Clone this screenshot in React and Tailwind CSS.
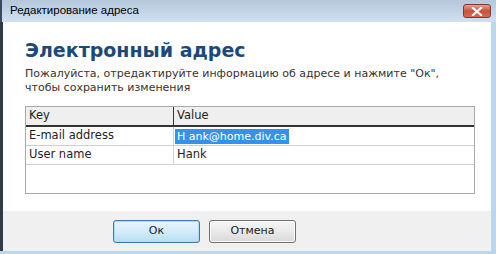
import React from "react";

export default function App() {
  const f = { fontFamily: '"DejaVu Sans", Verdana, sans-serif' };
  return (
    <div className="w-[496px] h-[254px] flex flex-col bg-[#bcd6ee] overflow-hidden" style={f}>
      {/* Title bar */}
      <div className="h-[22px] flex items-center justify-between pl-[8px] pr-[5px] bg-gradient-to-b from-[#b4c8dc] to-[#cfe0f1] border-l-[2px] border-[#3b4a5a]">
        <span className="text-[11.5px] text-black" style={{ fontFamily: '"Liberation Sans", Tahoma, sans-serif' }}>Редактирование адреса</span>
        <div className="w-[28px] h-[14px] rounded-[3px] border border-[#7a3a3a] bg-gradient-to-b from-[#e8a08c] via-[#c9503c] to-[#d86a52] flex items-center justify-center">
          <svg width="12" height="9" viewBox="0 0 12 9">
            <path d="M2 1 L10 8 M10 1 L2 8" stroke="#ffffff" strokeWidth="2.2" strokeLinecap="square" />
          </svg>
        </div>
      </div>
      {/* Body */}
      <div className="flex-1 flex flex-col mr-[5px] mb-[3px] bg-white border-l-[3px] border-[#2f3b48]">
        <div className="flex-1 flex flex-col pl-[22px] pr-[16px]">
          <h1 className="mt-[16px] text-[19px] leading-[24px] font-bold text-[#1c4a78]">Электронный адрес</h1>
          <p className="mt-[5px] text-[11px] leading-[14px] text-[#333333]">
            Пожалуйста, отредактируйте информацию об адресе и нажмите "Ок",
            <br />
            чтобы сохранить изменения
          </p>
          <div className="mt-[11px] w-[450px] h-[88px] border border-[#a9a9a9] text-[11.5px] text-[#222222]">
            <div className="flex h-[20px] bg-[#efefef] border-b-[2px] border-[#333333]">
              <div className="w-[148px] pl-[3px] flex items-center border-r-[1px] border-[#333333]">Key</div>
              <div className="flex-1 pl-[3px] flex items-center">Value</div>
            </div>
            <div className="flex h-[19px] border-b border-[#cfcfcf]">
              <div className="w-[148px] pl-[3px] flex items-center border-r border-[#cfcfcf]">E-mail address</div>
              <div className="flex-1 pl-[1px] flex items-center">
                <span className="bg-[#3592ec] text-white px-[2px] leading-[15px] text-[11px]">H ank@home.div.ca</span>
              </div>
            </div>
            <div className="flex h-[19px] border-b border-[#cfcfcf]">
              <div className="w-[148px] pl-[3px] flex items-center border-r border-[#cfcfcf]">User name</div>
              <div className="flex-1 pl-[3px] flex items-center">Hank</div>
            </div>
          </div>
        </div>
        <div className="h-[40px] bg-[#f0f0f0] flex items-start pt-[9px] pl-[110px] gap-[9px]">
          <button className="w-[87px] h-[23px] rounded-[3px] border border-[#3d7bad] bg-gradient-to-b from-[#e5f4fc] via-[#d4ecf9] to-[#b6ddf2] text-[11px] text-[#222222] shadow-[inset_0_0_0_1px_#a6dcf5]">Ок</button>
          <button className="w-[87px] h-[23px] rounded-[3px] border border-[#707070] bg-gradient-to-b from-[#f6f6f6] via-[#e9e9e9] to-[#d9d9d9] text-[11px] text-[#222222] shadow-[inset_0_0_0_1px_#fcfcfc]">Отмена</button>
        </div>
      </div>
    </div>
  );
}
